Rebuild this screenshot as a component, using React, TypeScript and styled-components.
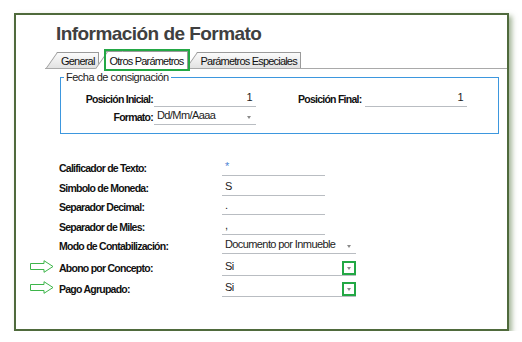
import React from 'react';
import styled, { createGlobalStyle } from 'styled-components';

const GlobalStyle = createGlobalStyle`
  html, body {
    margin: 0;
    padding: 0;
    background: #fff;
  }
  body {
    font-family: "Liberation Sans", Arial, sans-serif;
    color: #111;
  }
`;

// outer window

const Page = styled.div`
  padding: 13px 0 0 14px;
`;

const Frame = styled.div`
  box-sizing: border-box;
  width: 495px;
  height: 318px;
  padding-top: 8px;
  background: #fff;
  border: 2px solid #4f6a3c;
  box-shadow: 3px 3px 5px rgba(90, 120, 70, 0.55);
`;

const Title = styled.h1`
  margin: 0 0 0 40px;
  font-size: 19px;
  line-height: 22px;
  font-weight: bold;
  letter-spacing: -0.55px;
  color: #404040;
`;

// tabs

const TabStrip = styled.div`
  display: flex;
  align-items: flex-end;
  height: 17px;
  margin: 6px 0 0 29px;
  padding-left: 12px;
  border-bottom: 1px solid #a9a9a9;
`;

const Tab = styled.div<{ $active?: boolean; $gap: number }>`
  position: relative;
  z-index: ${(p) => (p.$active ? 2 : 1)};
  box-sizing: border-box;
  height: ${(p) => (p.$active ? 18 : 16)}px;
  margin-left: ${(p) => p.$gap}px;
  margin-bottom: ${(p) => (p.$active ? -1 : 0)}px;
  padding: ${(p) => (p.$active ? '2px' : '1px')} 3px 0 4px;
  font-size: 11px;
  line-height: 14px;
  letter-spacing: -0.8px;
  white-space: nowrap;
  background: ${(p) =>
    p.$active ? '#fff' : 'linear-gradient(#fbfbfb, #e2e2e2)'};
  border-top: 1px solid #9a9a9a;
  border-right: 1px solid #9a9a9a;
  outline: ${(p) => (p.$active ? '2px solid #23a845' : 'none')};

  &::before {
    content: '';
    position: absolute;
    top: -1px;
    bottom: 0;
    left: -11px;
    width: 14px;
    background: inherit;
    border-top: 1px solid #9a9a9a;
    border-left: 1px solid #9a9a9a;
    transform: skewX(-35deg);
    transform-origin: bottom left;
    z-index: -1;
  }
`;

// "Fecha de consignación" group

const Group = styled.fieldset`
  box-sizing: border-box;
  width: 439px;
  margin: 2px 0 0 44px;
  padding: 5px 0 8px 3px;
  border: 1px solid #3d97de;
  min-inline-size: 0;
`;

const Legend = styled.legend`
  padding: 0 2px;
  font-size: 11px;
  line-height: 13px;
  letter-spacing: -0.5px;
  color: #222;
`;

const GroupGrid = styled.div`
  display: grid;
  grid-template-columns: 90px 102px 41px 68px 102px;
  grid-auto-rows: 18px;
  align-items: end;
`;

const Label = styled.div<{ $align?: 'left' | 'right' }>`
  font-size: 10.5px;
  line-height: 13px;
  font-weight: bold;
  letter-spacing: -0.75px;
  color: #111;
  white-space: nowrap;
  text-align: ${(p) => p.$align || 'left'};
  padding: 0 ${(p) => (p.$align === 'right' ? '1px' : '0')} 1px 1px;
`;

const Field = styled.div<{ $width?: number; $right?: boolean; $h?: number }>`
  box-sizing: border-box;
  display: flex;
  align-items: flex-end;
  justify-content: ${(p) => (p.$right ? 'flex-end' : 'flex-start')};
  width: ${(p) => (p.$width ? `${p.$width}px` : 'auto')};
  height: ${(p) => p.$h || 20}px;
  padding: 0 ${(p) => (p.$right ? '4px' : '0')} 2px 3px;
  border-bottom: 1px solid #b9bdc2;
  font-size: 11px;
  line-height: 13px;
  letter-spacing: -0.6px;
  color: #222;
  white-space: nowrap;
`;

const Value = styled.span<{ $blue?: boolean }>`
  flex: 1;
  color: ${(p) => (p.$blue ? '#4f86d4' : '#222')};
`;

const ArrowBox = styled.span<{ $mark?: boolean }>`
  box-sizing: border-box;
  display: flex;
  align-items: center;
  justify-content: center;
  width: 14px;
  height: 14px;
  margin-bottom: -2px;
  border: 2px solid ${(p) => (p.$mark ? '#23a845' : 'transparent')};

  &::after {
    content: '';
    border-left: 2.5px solid transparent;
    border-right: 2.5px solid transparent;
    border-top: 3px solid #8a8a8a;
  }
`;

// lower form

const Form = styled.div`
  display: grid;
  grid-template-columns: 28px 164px auto;
  grid-template-rows: 22px repeat(4, 19.5px) 22px 21px;
  align-items: end;
  justify-items: start;
  margin: 20px 0 0 14px;
`;

const Pointer = styled.svg`
  width: 24px;
  height: 13px;
  margin-bottom: 3px;
`;

const GreenArrow = () => (
  <Pointer viewBox="0 0 24 13">
    <polygon
      points="0.5,3.5 14,3.5 14,0.7 23,6.5 14,12.3 14,9.5 0.5,9.5"
      fill="#fff"
      stroke="#3db54a"
      strokeWidth="1"
    />
  </Pointer>
);

const Select = ({
  value,
  width,
  mark,
  h,
}: {
  value: string;
  width: number;
  mark?: boolean;
  h?: number;
}) => (
  <Field $width={width} $h={h}>
    <Value>{value}</Value>
    <ArrowBox $mark={mark} />
  </Field>
);

const rows: { label: string; value: string; kind: 'text' | 'select'; mark?: boolean; blue?: boolean }[] = [
  { label: 'Calificador de Texto:', value: '*', kind: 'text', blue: true },
  { label: 'Simbolo de Moneda:', value: 'S', kind: 'text' },
  { label: 'Separador Decimal:', value: '.', kind: 'text' },
  { label: 'Separador de Miles:', value: ',', kind: 'text' },
  { label: 'Modo de Contabilización:', value: 'Documento por Inmueble', kind: 'select' },
  { label: 'Abono por Concepto:', value: 'Si', kind: 'select', mark: true },
  { label: 'Pago Agrupado:', value: 'Si', kind: 'select', mark: true },
];

export default function App() {
  return (
    <>
      <GlobalStyle />
      <Page>
        <Frame>
          <Title>Información de Formato</Title>
          <TabStrip>
            <Tab $gap={0}>General</Tab>
            <Tab $gap={7} $active>
              Otros Parámetros
            </Tab>
            <Tab $gap={9}>Parámetros Especiales</Tab>
          </TabStrip>

          <Group>
            <Legend>Fecha de consignación</Legend>
            <GroupGrid>
              <Label $align="right">Posición Inicial:</Label>
              <Field $right $h={18}>
                1
              </Field>
              <span />
              <Label>Posición Final:</Label>
              <Field $right $h={18}>
                1
              </Field>
              <Label $align="right">Formato:</Label>
              <Select value="Dd/Mm/Aaaa" width={102} h={18} />
            </GroupGrid>
          </Group>

          <Form>
            {rows.map((r) => (
              <React.Fragment key={r.label}>
                {r.mark ? <GreenArrow /> : <span />}
                <Label>{r.label}</Label>
                {r.kind === 'text' ? (
                  <Field $width={103}>
                    <Value $blue={r.blue}>{r.value}</Value>
                  </Field>
                ) : (
                  <Select value={r.value} width={134} mark={r.mark} />
                )}
              </React.Fragment>
            ))}
          </Form>
        </Frame>
      </Page>
    </>
  );
}
